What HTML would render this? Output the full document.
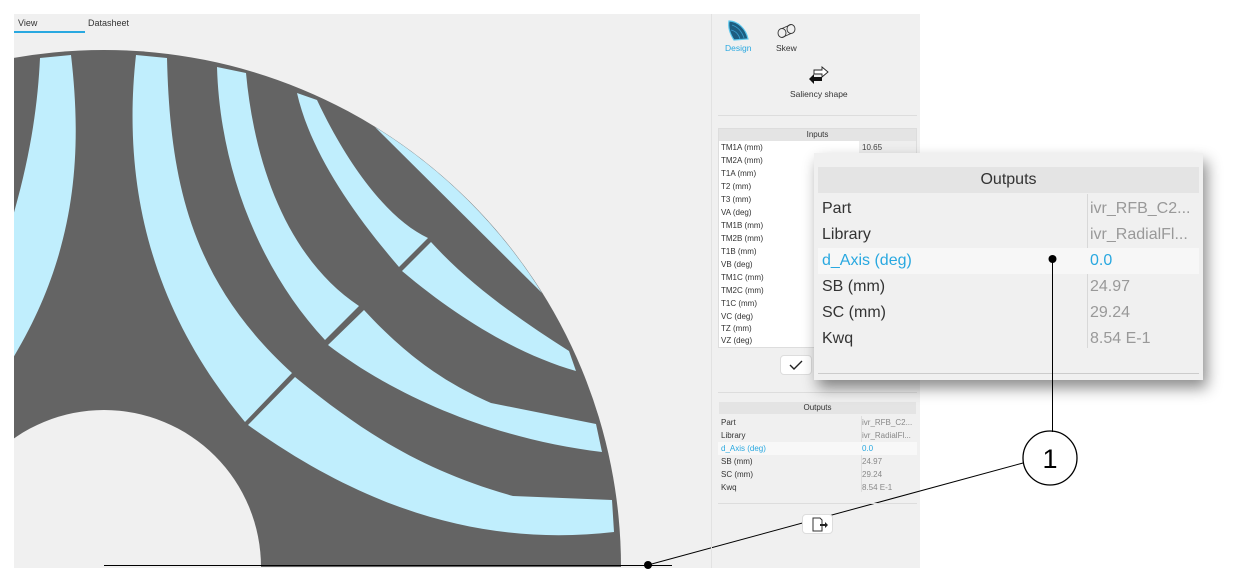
<!DOCTYPE html>
<html style="overflow:hidden;width:1252px;height:585px"><head><meta charset="utf-8"><style>
*{margin:0;padding:0;box-sizing:border-box}
body{width:1252px;height:585px;background:#fff;position:relative;overflow:hidden;font-family:"Liberation Sans",Arial,sans-serif}
.abs{position:absolute}
.t{font-size:9px;color:#333;position:absolute;white-space:nowrap}
.row{position:absolute;left:718px;width:199px;height:13px;font-size:8px;color:#333;line-height:13px}
.row span{position:absolute;left:3px}
.row b{font-weight:normal;position:absolute;left:144px;color:#888}
.pr{position:absolute;left:818px;width:381px;height:26px;font-size:16px;line-height:26px;color:#333}
.pr span{position:absolute;left:4px}
.pr b{font-weight:normal;position:absolute;left:272px;color:#999}
</style></head><body>
<div class="abs" style="left:14px;top:14px;width:906px;height:554px;background:#f0f0f0"></div>
<svg class="abs" style="left:0;top:0" width="1252" height="585">
<defs><clipPath id="c"><rect x="14" y="14" width="698" height="554"/></clipPath></defs>
<g clip-path="url(#c)">
<path d="M104,567 m-517,0 a517,517 0 0 1 1034,0 Z" fill="#646464"/>
<circle cx="104" cy="567" r="157" fill="#f0f0f0"/>
<g fill="#c0eefd">
<path d="M375,127 L542,293 A517,517 0 0 0 375,127 Z"/>
<path d="M40,58 L71,55 C82,150 78,250 13,358 L13,216 C32,150 38,100 40,58 Z"/>
<path d="M136,55 L167,58 C170,180 190,280 292,373 L245,422 C160,320 120,200 136,55 Z"/>
<path d="M248,425 L295,377 C360,430 420,470 513,496 L612,500 L614,532 C500,545 380,520 248,425 Z"/>
<path d="M217,67 L246,73 C255,170 290,260 359,306 L325,340 C260,270 220,170 217,67 Z"/>
<path d="M328,345 L364,310 C410,360 450,385 491,403 L596,424 L602,452 C500,440 400,400 328,345 Z"/>
<path d="M297,93 L317,100 C350,170 390,220 428,238 L399,267 C350,210 310,150 297,93 Z"/>
<path d="M402,271 L431,242 C470,285 520,320 569,351 L576,371 C520,355 460,320 402,271 Z"/>
</g>
</g>
<line x1="104" y1="565.5" x2="672" y2="565.5" stroke="#000" stroke-width="1"/>
<circle cx="648" cy="565" r="4" fill="#000"/>
<line x1="648" y1="565" x2="1023" y2="463" stroke="#000" stroke-width="1"/>
<circle cx="1050" cy="458" r="27" fill="#fff" stroke="#000" stroke-width="1.3"/>
<text x="1050" y="468" font-size="27" text-anchor="middle" font-family="Liberation Sans" fill="#000">1</text>
</svg>
<div class="t" style="left:18px;top:18px">View</div>
<div class="t" style="left:88px;top:18px">Datasheet</div>
<div class="abs" style="left:14px;top:31px;width:71px;height:2px;background:#29a8e0"></div>
<div class="abs" style="left:711px;top:14px;width:1px;height:554px;background:#e2e2e2"></div>
<svg class="abs" style="left:726px;top:19px" width="24" height="24"><path d="M3,2 C12,2 20,10 22,20 L8,21 C4,15 2,8 3,2Z" fill="#1d5d80" stroke="#5cc8ee" stroke-width="1.2"/><path d="M6,6 C12,8 16,13 18,19 M5,11 C10,12 13,16 14,20" stroke="#3a9ccc" fill="none" stroke-width="0.8"/></svg>
<div class="t" style="left:725px;top:43px;color:#29a8e0;font-size:8.5px">Design</div>
<svg class="abs" style="left:776px;top:23px" width="22" height="16"><ellipse cx="15" cy="6" rx="4" ry="4.5" fill="none" stroke="#333" stroke-width="0.9"/><ellipse cx="6" cy="10" rx="4" ry="4.5" fill="none" stroke="#333" stroke-width="0.9"/><line x1="6" y1="5.5" x2="15" y2="1.5" stroke="#333" stroke-width="0.9"/><line x1="6" y1="14.5" x2="15" y2="10.5" stroke="#333" stroke-width="0.9"/></svg>
<div class="t" style="left:776px;top:43px;font-size:8.5px">Skew</div>
<svg class="abs" style="left:808px;top:66px" width="22" height="20"><path d="M6,4 L14,4 L14,1 L20,6 L14,11 L14,8 L6,8 Z" fill="#fff" stroke="#222" stroke-width="0.9"/><path d="M14,11 L6,11 L6,8 L1,13 L6,18 L6,15 L14,15 Z" fill="#111"/></svg>
<div class="t" style="left:790px;top:89px;font-size:8.5px">Saliency shape</div>
<div class="abs" style="left:718px;top:115px;width:199px;height:1px;background:#ddd"></div>
<div class="abs" style="left:718px;top:128px;width:199px;height:220px;border:1px solid #ddd;background:#fff"></div>
<div class="abs" style="left:719px;top:129px;width:197px;height:12px;background:#e4e4e4;font-size:8px;text-align:center;line-height:12px;color:#333">Inputs</div>
<div class="abs" style="left:859px;top:141px;width:57px;height:13px;background:#eee"></div>
<div class="row" style="top:141px"><span>TM1A (mm)</span><b style="color:#444">10.65</b></div>
<div class="row" style="top:154px"><span>TM2A (mm)</span></div>
<div class="row" style="top:167px"><span>T1A (mm)</span></div>
<div class="row" style="top:180px"><span>T2 (mm)</span></div>
<div class="row" style="top:193px"><span>T3 (mm)</span></div>
<div class="row" style="top:206px"><span>VA (deg)</span></div>
<div class="row" style="top:219px"><span>TM1B (mm)</span></div>
<div class="row" style="top:232px"><span>TM2B (mm)</span></div>
<div class="row" style="top:245px"><span>T1B (mm)</span></div>
<div class="row" style="top:258px"><span>VB (deg)</span></div>
<div class="row" style="top:271px"><span>TM1C (mm)</span></div>
<div class="row" style="top:284px"><span>TM2C (mm)</span></div>
<div class="row" style="top:297px"><span>T1C (mm)</span></div>
<div class="row" style="top:310px"><span>VC (deg)</span></div>
<div class="row" style="top:322px"><span>TZ (mm)</span></div>
<div class="row" style="top:334px"><span>VZ (deg)</span></div>
<div class="abs" style="left:780px;top:355px;width:32px;height:20px;background:#fff;border:1px solid #ddd;border-radius:4px"><svg width="30" height="18"><path d="M9,9 L13,13 L21,5" fill="none" stroke="#222" stroke-width="1.4"/></svg></div>
<div class="abs" style="left:718px;top:392px;width:199px;height:1px;background:#ddd"></div>
<div class="abs" style="left:719px;top:402px;width:197px;height:12px;background:#e4e4e4;font-size:8px;text-align:center;line-height:12px;color:#333">Outputs</div>
<div class="abs" style="left:861px;top:416px;width:1px;height:76px;background:#ddd"></div>
<div class="row" style="top:416px"><span>Part</span><b>ivr_RFB_C2...</b></div>
<div class="row" style="top:429px"><span>Library</span><b>ivr_RadialFl...</b></div>
<div class="row" style="top:442px;background:#f8f8f8"><span style="color:#29a8e0">d_Axis (deg)</span><b style="color:#29a8e0">0.0</b></div>
<div class="row" style="top:455px"><span>SB (mm)</span><b>24.97</b></div>
<div class="row" style="top:468px"><span>SC (mm)</span><b>29.24</b></div>
<div class="row" style="top:481px"><span>Kwq</span><b>8.54 E-1</b></div>
<div class="abs" style="left:718px;top:503px;width:199px;height:1px;background:#ddd"></div>
<div class="abs" style="left:802px;top:514px;width:31px;height:20px;background:#fff;border:1px solid #ddd;border-radius:4px"><svg width="30" height="18"><path d="M10,3 L17,3 L19,5 L19,16 L10,16 Z" fill="#fff" stroke="#333" stroke-width="1"/><path d="M17,9 L22,9 L22,7 L25,10 L22,13 L22,11 L17,11Z" fill="#222"/></svg></div>
<div class="abs" style="left:814px;top:153px;width:389px;height:227px;background:#f0f0f0;box-shadow:4px 8px 14px rgba(0,0,0,0.45)"></div>
<div class="abs" style="left:818px;top:167px;width:381px;height:26px;background:#e4e4e4;font-size:16px;text-align:center;line-height:26px;color:#333">Outputs</div>
<div class="abs" style="left:1087px;top:194px;width:1px;height:154px;background:#d8d8d8"></div>
<div class="pr" style="top:196px"><span>Part</span><b>ivr_RFB_C2...</b></div>
<div class="pr" style="top:222px"><span>Library</span><b>ivr_RadialFl...</b></div>
<div class="pr" style="top:248px;background:#f7f7f7"><span style="color:#29a8e0">d_Axis (deg)</span><b style="color:#29a8e0">0.0</b></div>
<div class="pr" style="top:274px"><span>SB (mm)</span><b>24.97</b></div>
<div class="pr" style="top:300px"><span>SC (mm)</span><b>29.24</b></div>
<div class="pr" style="top:326px"><span>Kwq</span><b>8.54 E-1</b></div>
<div class="abs" style="left:818px;top:373px;width:381px;height:1px;background:#ccc"></div>
<svg class="abs" style="left:1040px;top:250px" width="30" height="182"><circle cx="12.5" cy="9" r="4" fill="#000"/><line x1="12.5" y1="9" x2="12.5" y2="182" stroke="#000"/></svg>
</body></html>
